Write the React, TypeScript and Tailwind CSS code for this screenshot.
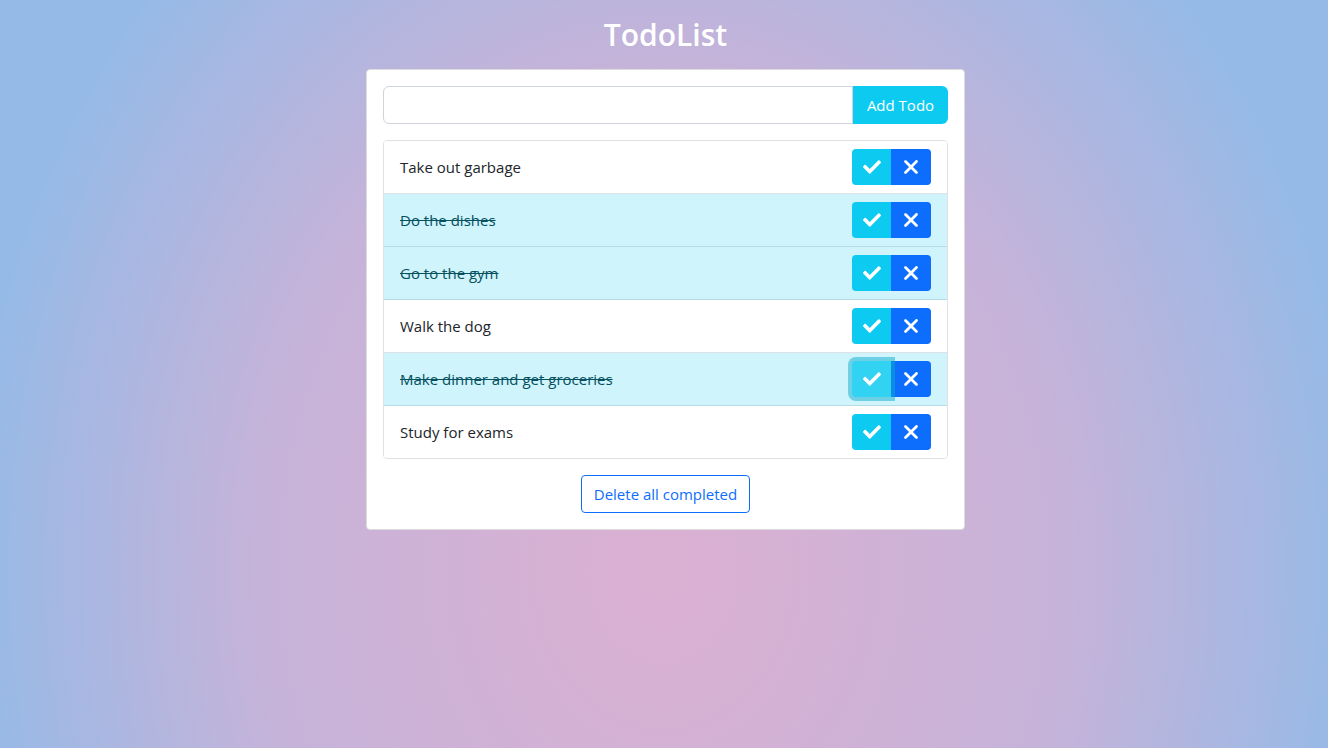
import { useState } from "react";
import { FaCheck } from "react-icons/fa";
import { FaXmark } from "react-icons/fa6";

type Todo = { id: number; text: string; done: boolean };

const initial: Todo[] = [
    { id: 1, text: "Take out garbage", done: false },
    { id: 2, text: "Do the dishes", done: true },
    { id: 3, text: "Go to the gym", done: true },
    { id: 4, text: "Walk the dog", done: false },
    { id: 5, text: "Make dinner and get groceries", done: true },
    { id: 6, text: "Study for exams", done: false },
];

const TodoItem = ({ todo, focused }: { todo: Todo; focused: boolean }) => {
    return (
        <li
            className={`flex items-center justify-between h-[53px] last:h-[52px] px-4 border-b last:border-b-0
            ${todo.done ? "bg-[#cff4fc] text-[#055160] border-[#b6dde5]" : "bg-white text-[#212529] border-[#dee2e6]"}`}
        >
            <span className={todo.done ? "line-through" : ""}>{todo.text}</span>
            <div className="flex">
                <button
                    className={`w-[39px] h-9 flex items-center justify-center rounded-l-[4px] text-white
                    ${focused ? "bg-[#31d2f2] shadow-[0_0_0_4px_rgba(11,172,204,0.5)] relative z-10" : "bg-[#0dcaf0]"}`}
                >
                    <FaCheck className="w-[18px] h-[18px]" />
                </button>
                <button className="w-10 h-9 flex items-center justify-center rounded-r-[4px] bg-[#0d6efd] text-white">
                    <FaXmark className="w-[22px] h-[22px]" />
                </button>
            </div>
        </li>
    );
};

export default function App() {
    const [todos] = useState<Todo[]>(initial);
    const [text, setText] = useState("");
    return (
        <div
            className="min-h-screen w-full bg-[radial-gradient(700px_860px_at_50%_76%,#dbb0d2_0%,#c6b3d9_58%,#95bae7_100%)] pt-3 pl-[3px]"
            style={{ fontFamily: '"Open Sans", "Noto Sans", sans-serif' }}
        >
            <h1 className="text-center text-white font-semibold text-[30px] leading-[46px] mb-[11px]">TodoList</h1>
            <div className="w-[599px] mx-auto bg-white border border-[#dcdcdc] rounded-[4px] p-4">
                <div className="flex h-[38px]">
                    <input
                        className="flex-1 border border-[#ced4da] rounded-l-[6px] px-3 outline-none"
                        value={text}
                        onChange={(e) => setText(e.target.value)}
                    />
                    <button className="w-[95px] bg-[#0dcaf0] text-white rounded-r-[6px] text-[15px]">Add Todo</button>
                </div>
                <ul className="mt-4 border border-[#dee2e6] rounded-[4px] overflow-hidden text-[15px]">
                    {todos.map((t) => (
                        <TodoItem key={t.id} todo={t} focused={t.id === 5} />
                    ))}
                </ul>
                <div className="flex justify-center mt-4">
                    <button className="h-[38px] px-3 border border-[#0d6efd] text-[#0d6efd] rounded-[4px] text-[15px]">
                        Delete all completed
                    </button>
                </div>
            </div>
        </div>
    );
}
